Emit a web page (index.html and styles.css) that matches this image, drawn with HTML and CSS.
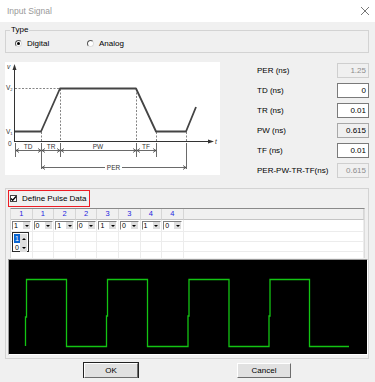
FILE: index.html
```html
<!DOCTYPE html>
<html lang="en">
<head>
	<meta charset="UTF-8">
	<title>Input Signal</title>
	<link rel="stylesheet" href="styles.css">
</head>
<body>
	<div class="titlebar">
		<span>Input Signal</span>
		<svg class="close" width="10" height="10" viewBox="0 0 10 10"><path d="M1 1 L9 9 M9 1 L1 9" stroke="#777" stroke-width="1" fill="none"/></svg>
	</div>

	<fieldset class="group type">
		<legend>Type</legend>
		<div class="radios">
			<label class="radio on"><i></i>Digital</label>
			<label class="radio"><i></i>Analog</label>
		</div>
	</fieldset>

	<div class="mid">
		<svg class="diagram" viewBox="0 0 215 113">
			<g stroke="#333" stroke-width="1" fill="none">
				<path d="M9.5 80 V5"/>
				<path d="M9 79.5 H206"/>
			</g>
			<path d="M7.5 8 L9.5 2 L11.5 8 Z" fill="#333"/>
			<path d="M203 77.5 L209 79.5 L203 81.5 Z" fill="#333"/>
			<g stroke="#666" stroke-width="0.8" stroke-dasharray="2 1.5" fill="none">
				<path d="M10 26.5 H55"/>
				<path d="M36.5 70 V79 M55.5 27 V79 M131.5 27 V79 M151.5 70 V79 M181.5 70 V79"/>
			</g>
			<path d="M10 69.5 H36 L55 26.5 H131 L151 69.5 H181 L191 45" stroke="#444" stroke-width="1.8" fill="none" stroke-linejoin="round"/>
			<g stroke="#444" stroke-width="0.8" fill="none">
				<path d="M10.5 81 V95 M36.5 81 V107 M55.5 81 V95 M131.5 81 V95 M151.5 81 V95 M181.5 81 V107"/>
				<path d="M11 88.5 H36 M37 88.5 H55 M56 88.5 H131 M132 88.5 H151"/>
				<path d="M37 105.5 H100 M117 105.5 H181"/>
				<path d="M14 86.5 L11 88.5 L14 90.5 M33 86.5 L36 88.5 L33 90.5"/>
				<path d="M40 86.5 L37 88.5 L40 90.5 M52 86.5 L55 88.5 L52 90.5"/>
				<path d="M59 86.5 L56 88.5 L59 90.5 M128 86.5 L131 88.5 L128 90.5"/>
				<path d="M135 86.5 L132 88.5 L135 90.5 M148 86.5 L151 88.5 L148 90.5"/>
				<path d="M40 103.5 L37 105.5 L40 107.5 M178 103.5 L181 105.5 L178 107.5"/>
			</g>
			<g class="dlabels" fill="#333" text-anchor="middle">
				<text x="23" y="87">TD</text>
				<text x="46" y="87">TR</text>
				<text x="93" y="87">PW</text>
				<text x="141" y="87">TF</text>
				<text x="108.5" y="108">PER</text>
			</g>
			<g class="dlabels" fill="#333">
				<text x="2" y="7" font-style="italic">v</text>
				<text x="1" y="28">V<tspan font-size="4" dy="1">2</tspan></text>
				<text x="1" y="72">V<tspan font-size="4" dy="1">1</tspan></text>
				<text x="3" y="84">0</text>
				<text x="210" y="82" font-style="italic">t</text>
			</g>
		</svg>

		<div class="params">
			<div class="row"><span>PER (ns)</span><span class="field ro off">1.25</span></div>
			<div class="row"><span>TD (ns)</span><span class="field">0</span></div>
			<div class="row"><span>TR (ns)</span><span class="field">0.01</span></div>
			<div class="row"><span>PW (ns)</span><span class="field ro">0.615</span></div>
			<div class="row"><span>TF (ns)</span><span class="field">0.01</span></div>
			<div class="row"><span>PER-PW-TR-TF(ns)</span><span class="field ro off">0.615</span></div>
		</div>
	</div>

	<div class="group pulse">
		<label class="check"><i><svg width="7" height="7" viewBox="0 0 7 7"><path d="M1 3.5 L2.7 5.2 L6 1.5" stroke="#000" stroke-width="1.3" fill="none"/></svg></i>Define Pulse Data</label>

		<div class="grid">
			<div class="hd">1</div><div class="hd">1</div><div class="hd">2</div><div class="hd">2</div>
			<div class="hd">3</div><div class="hd">3</div><div class="hd">4</div><div class="hd">4</div><div class="hd"></div>

			<div class="cell"><span class="combo"><b>1</b><i></i></span></div>
			<div class="cell"><span class="combo"><b>0</b><i></i></span></div>
			<div class="cell"><span class="combo"><b>1</b><i></i></span></div>
			<div class="cell"><span class="combo"><b>0</b><i></i></span></div>
			<div class="cell"><span class="combo"><b>1</b><i></i></span></div>
			<div class="cell"><span class="combo"><b>0</b><i></i></span></div>
			<div class="cell"><span class="combo"><b>1</b><i></i></span></div>
			<div class="cell"><span class="combo"><b>0</b><i></i></span></div>
			<div class="cell"></div>

			<div class="cell"></div><div class="cell"></div><div class="cell"></div><div class="cell"></div><div class="cell"></div>
			<div class="cell"></div><div class="cell"></div><div class="cell"></div><div class="cell"></div>
			<div class="cell"></div><div class="cell"></div><div class="cell"></div><div class="cell"></div><div class="cell"></div>
			<div class="cell"></div><div class="cell"></div><div class="cell"></div><div class="cell"></div>
			<div class="cell"></div><div class="cell"></div><div class="cell"></div><div class="cell"></div><div class="cell"></div>
			<div class="cell"></div><div class="cell"></div><div class="cell"></div><div class="cell"></div>

			<div class="drop">
				<div class="opt sel"><b>1</b><i class="up"></i></div>
				<div class="opt"><b>0</b><i class="dn"></i></div>
			</div>
		</div>

		<div class="scope">
			<svg width="357" height="94" viewBox="0 0 357 94">
				<path d="M16.5 86 V57 H17.5 V19.5 H57.5 V86.5 H97.5 V56 H98.5 V19.5 H138.5 V86.5 H179 V56 H180 V19.5 H220 V86.5 H260 V56 H261 V19.5 H300.5 V86.5 H340" stroke="#13c413" stroke-width="1.3" fill="none"/>
			</svg>
		</div>
	</div>

	<div class="buttons">
		<button class="btn default">OK</button>
		<button class="btn">Cancel</button>
	</div>
</body>
</html>
```

FILE: styles.css
```css
* { box-sizing: border-box; }
body { margin: 0; background: #f0f0f0; font-family: "Liberation Sans", Arial, sans-serif; font-size: 8px; color: #000; }

.titlebar { height: 22px; background: #fff; display: flex; align-items: center; justify-content: space-between; padding: 0 5px 0 7px; color: #999; font-size: 8.5px; }
.close { display: block; }

.group { border: 1px solid #d3d3d3; margin: 0 6px 0 5px; }
fieldset.type { margin-top: 3px; padding: 2px 0 3px 4px; min-width: 0; }
fieldset.type legend { padding: 0 1px; line-height: 10px; }
.radios { display: flex; height: 12px; align-items: center; padding-left: 5px; }
.radio { display: flex; align-items: center; gap: 5px; width: 72px; }
.radio i { width: 7px; height: 7px; border-radius: 50%; border: 1px solid; border-color: #555 #ddd #ddd #555; background: #fff; display: flex; align-items: center; justify-content: center; }
.radio.on i::after { content: ""; width: 3px; height: 3px; border-radius: 50%; background: #000; }

.mid { display: flex; margin-top: 9px; height: 113px; }
.diagram { display: block; width: 215px; height: 113px; margin-left: 5px; background: #fff; }
.dlabels { font-family: "Liberation Sans", Arial, sans-serif; font-size: 6.5px; }
.params { flex: 1; padding: 1px 6px 0 37px; display: flex; flex-direction: column; gap: 5px; }
.row { display: flex; justify-content: space-between; align-items: center; height: 15px; }
.field { width: 32px; height: 15px; border: 1px solid #7a7a7a; background: #fff; text-align: right; padding-right: 2px; line-height: 13px; }
.field.ro { background: #f0f0f0; border-color: #a8a8a8; }
.field.off { color: #8d8d8d; border-color: #cfcfcf; }

.pulse { margin-top: 13px; height: 171px; padding: 1px 0 0 2px; }
.check { display: flex; align-items: center; gap: 5px; width: 82px; height: 17px; padding-left: 1px; border: 1.5px solid #ee1c24; }
.check i { width: 7px; height: 7px; background: #fff; border: 1px solid #444; display: flex; align-items: center; justify-content: center; }
.check svg { display: block; flex: none; }

.grid { position: relative; margin: 1px 3px 0 2px; height: 50px; display: grid; grid-template-columns: repeat(8, 21.6px) 1fr; grid-template-rows: 11px 12px 10px 10px 10px; background: #fff; border-top: 1px solid #8a8a8a; border-left: 1px solid #dcdcdc; border-right: 1px solid #dcdcdc; overflow: hidden; }
.hd { background: #f0f0f0; color: #2424e0; text-align: center; font-size: 7.5px; line-height: 10px; border-right: 1px solid #d6d6d6; border-bottom: 1px solid #c4c4c4; }
.cell { border-right: 1px solid #ececec; border-bottom: 1px solid #ececec; }
.combo { display: flex; margin: 1px 0 0 1px; width: 19px; height: 9px; border: 1px solid; border-color: #808080 #fff #fff #808080; background: #fff; }
.combo b, .opt b { flex: 1; font-weight: normal; font-size: 7px; line-height: 7px; padding-left: 1px; }
.combo i, .opt i { width: 7px; background: #dedede; display: flex; align-items: center; justify-content: center; }
.combo i::after, .opt i.dn::after { content: ""; border: 2px solid transparent; border-top: 2px solid #000; border-bottom: 0; }
.opt i.up::after { content: ""; border: 2px solid transparent; border-bottom: 2px solid #000; border-top: 0; }
.drop { position: absolute; left: 1px; top: 23px; width: 17px; height: 20px; border: 1px solid #2a2a2a; background: #fff; display: flex; flex-direction: column; padding: 1px; }
.opt { display: flex; height: 9px; }
.opt b { line-height: 9px; }
.opt.sel b { background: #0a64d0; color: #fff; }

.scope { margin-top: 1px; height: 96px; background: #000; border: 1px solid; border-color: #9a9a9a #fff #fff #9a9a9a; }
.scope svg { display: block; }

.buttons { display: flex; gap: 99px; margin-top: 4px; padding-left: 84px; }
.btn { width: 54px; height: 15px; padding: 0; font: inherit; color: #000; background: #e1e1e1; border: 1px solid; border-color: #fff #6d6d6d #6d6d6d #fff; box-shadow: 0 0 0 0 transparent; }
.btn.default { outline: 1px solid #222; outline-offset: 0; }
```
